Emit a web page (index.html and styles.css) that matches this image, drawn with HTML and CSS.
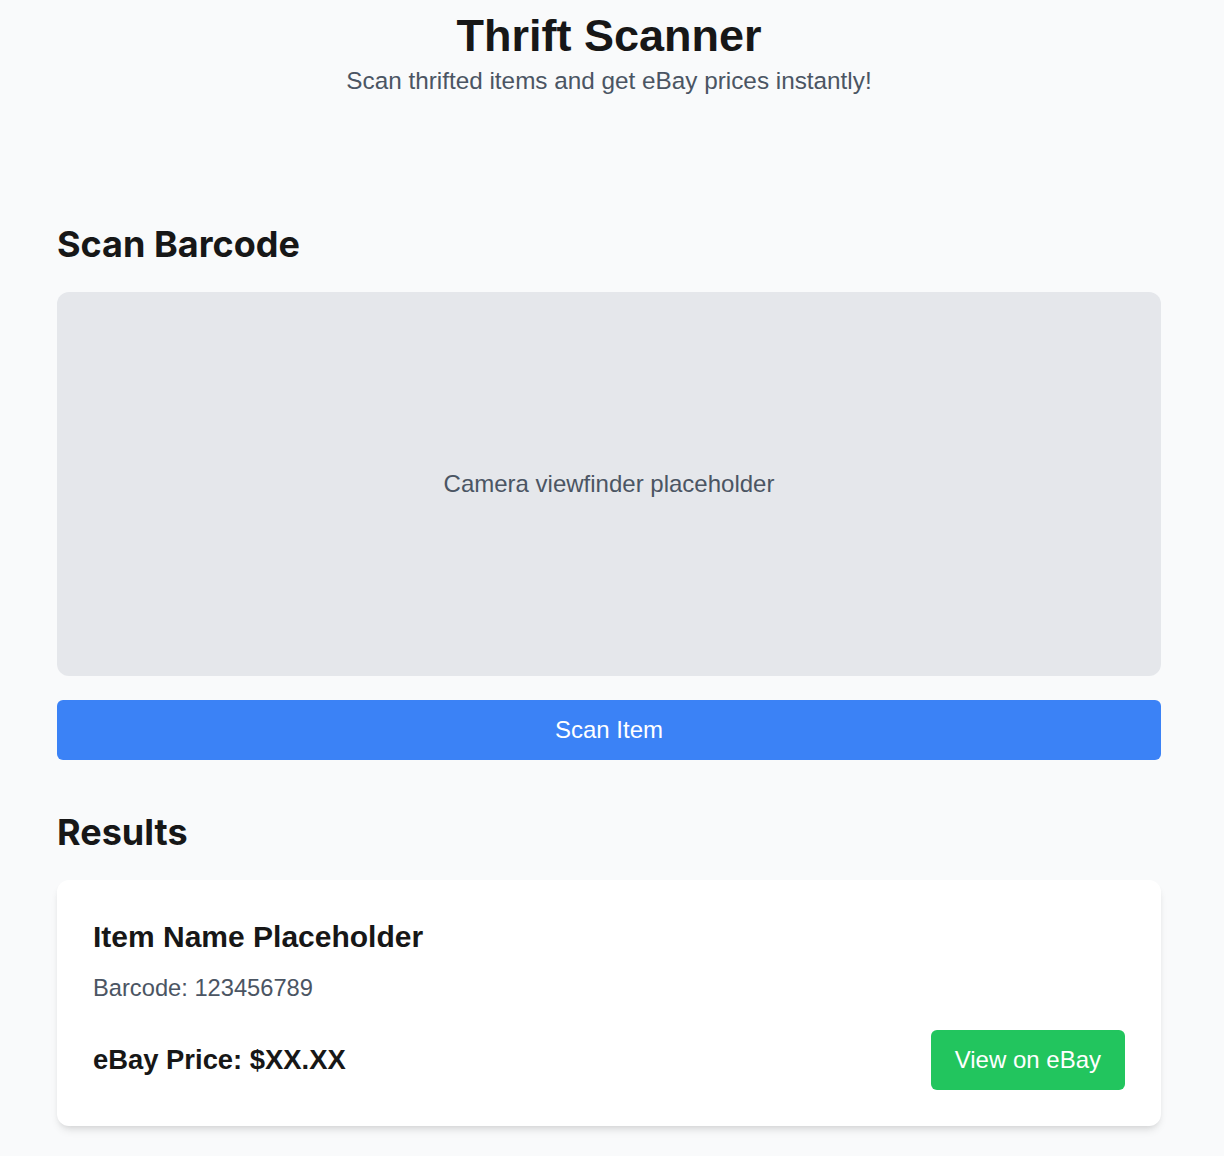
FILE: index.html
```html
<!DOCTYPE html>
<html lang="en">
<head>
<meta charset="utf-8">
<title>Thrift Scanner</title>
<link rel="stylesheet" href="styles.css">
</head>
<body>
<div class="page">
  <header class="header">
    <h1 class="title">Thrift Scanner</h1>
    <p class="subtitle">Scan thrifted items and get eBay prices instantly!</p>
  </header>

  <section class="scan">
    <h2 class="section-title">Scan Barcode</h2>
    <div class="viewfinder">Camera viewfinder placeholder</div>
    <button class="scan-btn" type="button">Scan Item</button>
  </section>

  <section class="results">
    <h2 class="section-title">Results</h2>
    <div class="card">
      <h3 class="item-name">Item Name Placeholder</h3>
      <p class="barcode">Barcode: 123456789</p>
      <div class="price-row">
        <span class="price">eBay Price: $XX.XX</span>
        <a class="ebay-btn" href="#">View on eBay</a>
      </div>
    </div>
  </section>
</div>
</body>
</html>
```

FILE: styles.css
```css
* { box-sizing: border-box; }

html, body {
  margin: 0;
  padding: 0;
  background: #f9fafb;
  font-family: "Liberation Sans", Arial, sans-serif;
  color: #111827;
}

.page {
  padding: 9px 63px 40px 57px;
}

.header {
  text-align: center;
}

.title {
  margin: 0;
  font-size: 45px;
  line-height: 54px;
  font-weight: 700;
  color: #171717;
}

.subtitle {
  margin: 0;
  font-size: 24.3px;
  line-height: 36px;
  color: #4b5563;
}

.scan {
  margin-top: 121px;
}

.section-title {
  margin: 0 0 24px;
  font-family: "Inter", "Liberation Sans", sans-serif;
  font-size: 36px;
  line-height: 48px;
  font-weight: 700;
  color: #171717;
}

.viewfinder {
  height: 384px;
  border-radius: 12px;
  background: #e5e7eb;
  color: #4b5563;
  font-size: 24px;
  display: flex;
  align-items: center;
  justify-content: center;
}

.scan-btn {
  display: block;
  width: 100%;
  margin-top: 24px;
  height: 60px;
  border: 0;
  border-radius: 6px;
  background: #3b82f6;
  color: #ffffff;
  font-family: "Liberation Sans", Arial, sans-serif;
  font-size: 24px;
  cursor: pointer;
}

.results {
  margin-top: 48px;
}

.card {
  background: #ffffff;
  border-radius: 12px;
  padding: 36px;
  box-shadow: 0 6px 9px -2px rgba(0, 0, 0, 0.1), 0 3px 6px -3px rgba(0, 0, 0, 0.1);
}

.item-name {
  margin: 0;
  font-size: 30px;
  line-height: 42px;
  font-weight: 700;
  color: #171717;
}

.barcode {
  margin: 12px 0 0;
  font-size: 23.7px;
  line-height: 36px;
  color: #4b5563;
}

.price-row {
  margin-top: 24px;
  display: flex;
  align-items: center;
  justify-content: space-between;
}

.price {
  font-size: 27.4px;
  font-weight: 700;
  color: #171717;
}

.ebay-btn {
  display: inline-flex;
  align-items: center;
  height: 60px;
  padding: 0 24px;
  border-radius: 6px;
  background: #22c55e;
  color: #ffffff;
  font-size: 24px;
  text-decoration: none;
}
```
